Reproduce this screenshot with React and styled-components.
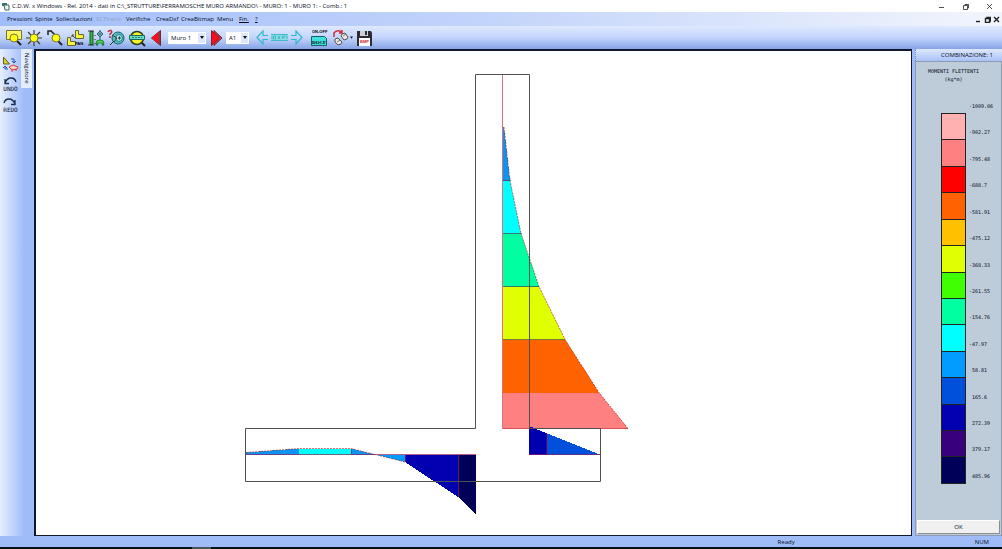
import React from "react";
import styled, { createGlobalStyle } from "styled-components";

const menu = [
  { label: "Pressioni", width: 28 },
  { label: "Spinte", width: 21 },
  { label: "Sollecitazioni", width: 40 },
  { label: "Sf.Tiranti", width: 30, disabled: true },
  { label: "Verifiche", width: 30 },
  { label: "CreaDxf", width: 25 },
  { label: "CreaBitmap", width: 36 },
  { label: "Menu", width: 22 },
  { label: "Fin.", width: 16, underline: true },
  { label: "?", width: 8, underline: true },
];

const legendColors = [
  "#ffb0b0", "#ff8080", "#ff0000", "#ff6200", "#ffc000", "#e0ff00", "#40ff00",
  "#00ffa0", "#00ffff", "#009cff", "#0050dc", "#0000b0", "#38007c", "#000058",
];

const legendValues = [
  "-1009.06", "-902.27", "-795.48", "-688.7", "-581.91", "-475.12", "-368.33", "-261.55",
  "-154.76", "-47.97", "58.81", "165.6", "272.39", "379.17", "485.96",
];

export default function App() {
  return (
    <>
      <GlobalStyle />
      <Window>
        <TitleBar>
          <AppIcon />
          <Title>
            C.D.W. x Windows - Rel. 2014 - dati in C:\_STRUTTURE\FERRAMOSCHE MURO ARMANDO\ - MURO: 1 - MURO 1: - Comb.: 1
          </Title>
          <WindowControls>
            <PlainButton aria-label="Minimize"><ControlIcon kind="min" /></PlainButton>
            <PlainButton aria-label="Restore"><ControlIcon kind="restore" /></PlainButton>
            <PlainButton aria-label="Close"><ControlIcon kind="close" /></PlainButton>
          </WindowControls>
        </TitleBar>
        <MenuBar>
          {menu.map((m) => (
            <MenuItem key={m.label} $width={m.width} $underline={m.underline} disabled={m.disabled}>
              {m.label}
            </MenuItem>
          ))}
          <ChildControls>
            <PlainButton aria-label="Minimize view"><ControlIcon kind="min" bold /></PlainButton>
            <PlainButton aria-label="Restore view"><ControlIcon kind="restore" bold /></PlainButton>
            <PlainButton aria-label="Close view"><ControlIcon kind="close" bold /></PlainButton>
          </ChildControls>
        </MenuBar>
        <Toolbar />
        <Body>
          <LeftBar>
            <Tools>
              <SideButton aria-label="Redraw"><RedrawIcon /></SideButton>
              <SideButton><CurveIcon />UNDO</SideButton>
              <SideButton><CurveIcon flip />REDO</SideButton>
            </Tools>
            <Navigator>Navigatore</Navigator>
          </LeftBar>
          <Canvas>
            <MomentDiagram />
          </Canvas>
          <Panel>
            <PanelTitle>COMBINAZIONE: 1</PanelTitle>
            <PanelBody>
              <LegendTitle>MOMENTI FLETTENTI<br />(kg*m)</LegendTitle>
              <Legend>
                <Swatches>
                  {legendColors.map((c) => <Swatch key={c} $color={c} />)}
                </Swatches>
                <Values>
                  {legendValues.map((v) => (
                    <Value key={v} $positive={!v.startsWith("-")}>{v}</Value>
                  ))}
                </Values>
              </Legend>
              <OkButton>OK</OkButton>
            </PanelBody>
          </Panel>
        </Body>
        <StatusBar>
          <span>Ready</span>
          <span>NUM</span>
        </StatusBar>
        <Taskbar><TaskMark /></Taskbar>
      </Window>
    </>
  );
}

function Toolbar() {
  return (
    <ToolRow>
      <ToolGroup>
        <ToolButton aria-label="Zoom window">
          <Icon viewBox="0 0 18 18">
            <path d="M1.500 1.500h15v9h-15z" fill="#fdf95c" stroke="#77733a" />
            <Lens cx="9" cy="9" />
          </Icon>
        </ToolButton>
        <ToolButton aria-label="Zoom all">
          <Icon viewBox="0 0 18 18">
            <path d="M9 1v4M9 13v4M1 9h4M13 9h4M3 3l3 3M15 3l-3 3M3 15l3-3M15 15l-3-3" stroke="#3a3a30" strokeWidth="1.200" />
            <circle cx="9" cy="9" r="4" fill="#ffff10" stroke="#77733a" />
          </Icon>
        </ToolButton>
        <ToolButton aria-label="Zoom previous">
          <Icon viewBox="0 0 18 18">
            <path d="M2 6V2h4M2 2h3l4 4" fill="none" stroke="#222" strokeWidth="1.500" />
            <Lens cx="10" cy="9" />
          </Icon>
        </ToolButton>
        <ToolButton aria-label="Pan">
          <Icon viewBox="0 0 18 18">
            <path d="M9.500 1.500h3v4h5v4h-8z" fill="#f4f23c" stroke="#66662c" />
            <path d="M1.500 8.500h3v4h5v4h-8z" fill="#f4f23c" stroke="#66662c" />
            <path d="M9 9L6 6M6 8V6h2" stroke="#444" fill="none" />
            <text x="9" y="16" fontSize="4" fontWeight="bold" fontFamily="Liberation Sans, sans-serif">PAN</text>
          </Icon>
        </ToolButton>
        <ToolButton aria-label="Wall view">
          <Icon viewBox="0 0 18 18">
            <path d="M3 2.500h3v13H3z" fill="#38b048" stroke="#175c22" />
            <path d="M1 2h6M1 16h6M8 6v1M8 10v1M8 14v1" stroke="#333" fill="none" />
            <path d="M13 1v10M10 5l3-3 3 3M10 5h6l-3 3z" fill="none" stroke="#2b6870" />
            <path d="M9 14q0-3 4-3t4 3z" fill="#52dd58" stroke="#20872b" />
            <circle cx="10" cy="15.500" r="1.300" fill="#168038" />
            <circle cx="16" cy="15.500" r="1.300" fill="#168038" />
          </Icon>
        </ToolButton>
        <ToolButton aria-label="Query element">
          <Icon viewBox="0 0 18 18">
            <circle cx="11" cy="9" r="6" fill="#53bfc5" stroke="#175e68" />
            <circle cx="12" cy="9" r="3.500" fill="#9ae7e1" stroke="#267d87" />
            <path d="M7 12l-4 4M11 9h3M12.500 7.500v3" stroke="#333" />
            <path d="M5 6l5 3-3 4" fill="none" stroke="#444" />
            <path d="M1 3q1-2 3-1.500Q6 3 3 5v1M3 7v2" fill="none" stroke="#c52235" strokeWidth="1.500" />
          </Icon>
        </ToolButton>
        <ToolButton aria-label="View data">
          <Icon viewBox="0 0 18 18">
            <path d="M13 13l4 4" stroke="#222" strokeWidth="2" />
            <circle cx="9" cy="9" r="6.500" fill="#f5f225" stroke="#2a3d25" strokeWidth="1.500" />
            <path d="M1.500 6.500h15v4h-15z" fill="#62dfc1" stroke="#25665c" />
            <path d="M4 8.500h10" stroke="#2e8074" strokeDasharray="2 1" />
          </Icon>
        </ToolButton>
        <ToolButton aria-label="Previous wall">
          <Icon viewBox="0 0 18 18">
            <path d="M3.500 9l9-7.500v15z" fill="#8b3a42" stroke="#6d2a30" />
            <path d="M3.500 9l7-6v12z" fill="#f8101c" />
          </Icon>
        </ToolButton>
      </ToolGroup>
      <Picker $width={38}>
        <Select aria-label="Wall" defaultValue="m1"><option value="m1">Muro  1</option></Select>
        <PickerArrow><Caret /></PickerArrow>
      </Picker>
      <ToolButton $width={18} aria-label="Next wall">
        <Icon viewBox="0 0 18 18">
          <path d="M7 1.500l8 7.500-8 7.500z" fill="#c8404a" stroke="#6d2a30" />
          <path d="M4.500 1.500l8 7.500-8 7.500z" fill="#f8101c" stroke="#8b1a22" />
        </Icon>
      </ToolButton>
      <Picker $width={23}>
        <Select aria-label="Combination" defaultValue="a1"><option value="a1">A1</option></Select>
        <PickerArrow><Caret /></PickerArrow>
      </Picker>
      <ArrowGroup>
        <OutlineArrow />
        <svg width="17" height="9" viewBox="0 0 17 9">
          <path d="M0 1h17v7H0z" fill="#8adbe6" />
          <path
            d="M0 1.500h17M0 7.500h17M2.500 3v3h2V3zM7 3l2 3M9 3L7 6M11.500 6V3h3M11.500 4.500h2M16 3v3M1 3v3"
            fill="none"
            stroke="#42bcc8"
          />
        </svg>
        <OutlineArrow right />
      </ArrowGroup>
      <ToolButton aria-label="Docx on-off">
        <svg width="18" height="18" viewBox="0 0 18 18" fontFamily="Liberation Sans, sans-serif" fontWeight="bold">
          <text x="2" y="4" fontSize="4">ON-OFF</text>
          <path d="M1.500 7.500h13l2 2v7h-15z" fill="#40e0dc" stroke="#176068" />
          <text x="2" y="15" fontSize="5" fontFamily="Liberation Serif, serif">DOCF</text>
        </svg>
      </ToolButton>
      <SwapButton aria-label="Swap view">
        <Icon viewBox="0 0 18 18">
          <path d="M2 8V4q2-3 6-2l2 2M10 1v3H7" fill="none" stroke="#d02c3b" strokeWidth="1.500" />
          <path d="M10 5l3-1 3 4-1 2-3 1-3-4zM3 10l3-1 4 4-1 2-3 1-3-3z" fill="#e9e7dc" stroke="#555" />
          <path d="M11 7l3-2M5 13l3-2" stroke="#777" />
        </Icon>
        <Caret small />
      </SwapButton>
      <ToolButton aria-label="Save BMP">
        <Icon viewBox="0 0 18 18">
          <path d="M2 2h14l1 2v13H2z" fill="#302b32" />
          <path d="M5 2h8v5H5z" fill="#cbd2d6" />
          <path d="M10 2h2v4h-2z" fill="#302b32" />
          <path d="M4 9h11v8H4z" fill="#fff" />
          <text x="5" y="14" fontSize="4" fontWeight="bold" fontFamily="Liberation Sans, sans-serif" fill="#d31d2a">BMP</text>
        </Icon>
      </ToolButton>
    </ToolRow>
  );
}

function Lens({ cx, cy }) {
  return (
    <>
      <path d="M12 12l4 4" stroke="#222" strokeWidth="2" />
      <circle cx={cx} cy={cy} r="4" fill="#ffff10" stroke="#77733a" />
    </>
  );
}

function Caret({ small }) {
  return (
    <svg width={small ? 3 : 4} height="3" viewBox="0 0 4 3" aria-hidden="true">
      <path d="M0 0h4L2 3z" fill="#111" />
    </svg>
  );
}

function OutlineArrow({ right }) {
  return (
    <svg width="12" height="15" viewBox="0 0 12 15" fill="none" stroke="#30b8cc" strokeWidth="1.200">
      <path d={right ? "M0 5.500h5V1l6 6.500L5 14V9.500H0" : "M12 5.500H7V1L1 7.500 7 14V9.500h5"} />
    </svg>
  );
}

function AppIcon() {
  return (
    <svg width="9" height="9" viewBox="0 0 9 9" fill="none">
      <path d="M1 1h5v3H1z" fill="#397a7a" />
      <path d="M3 3h5v5H4z" fill="#eef5ef" stroke="#3a6666" />
    </svg>
  );
}

function ControlIcon({ kind, bold }) {
  const paths = {
    min: bold ? "M1 5.500h4" : "M1 4.500h5",
    restore: "M1.500 2.500h4v4h-4zM3 2V1.500h3.500V5H6",
    close: "M1 1l5 5M6 1L1 6",
  };
  return (
    <svg width="7" height="7" viewBox="0 0 7 7" fill="none" stroke="#222" strokeWidth={bold ? 1.4 : 0.8}>
      <path d={paths[kind]} />
    </svg>
  );
}

function RedrawIcon() {
  return (
    <svg width="17" height="16" viewBox="0 0 17 16" fill="none">
      <path d="M1.500 1v7h6z" fill="#d8d030" stroke="#665f20" />
      <path d="M9 3h3v4M10 5l2 2 2-2M6 13H3v-3M1 12l2-2 2 2" stroke="#214fc0" />
      <path d="M7 11l4-2 5 2-1 2-5 1z" fill="#f6d3c7" stroke="#d93c33" />
      <path d="M10 13v3M14 13v2" stroke="#d93c33" />
    </svg>
  );
}

function CurveIcon({ flip }) {
  return (
    <svg width="14" height="9" viewBox="0 0 14 9" fill="none" stroke="#16304f" strokeWidth="1.300">
      <path d={flip ? "M1 6q1-4 5-4 4 0 6 5M8 7.500h4V3" : "M13 6q-1-4-5-4-4 0-6 5M6 7.500H2V3"} />
    </svg>
  );
}

// Retaining wall section with the bending moment bands drawn on stem and footing
function MomentDiagram() {
  return (
    <Drawing viewBox="36 51 875 484" role="img" aria-label="Momenti flettenti">
      <g shapeRendering="crispEdges">
        <path d="M503 127H504L510 180.500H503z" fill="#0c94f2" />
        <path d="M503 180.500H510L521 233.500H503z" fill="#00ffff" />
        <path d="M503 233.500H521L539 286.500H503z" fill="#00ffa0" />
        <path d="M503 286.500H539L565 339.500H503z" fill="#e0ff00" />
        <path d="M503 339.500H565L599 392.500H503z" fill="#ff6200" />
        <path d="M503 392.500H599L628 428.500H503z" fill="#ff8080" />
        <path d="M529 426L547 433.500V454.500H529z" fill="#0000b0" />
        <path d="M547 433.500L600 454.500H547z" fill="#0050dc" />
        <path d="M246 452.500L299 448.500V454.500H246z" fill="#0c94f2" />
        <path d="M299 448.500H351V454.500H299z" fill="#00ffff" />
        <path d="M351 448.500L375 454.500H351z" fill="#0c94f2" />
        <path d="M375 454.500H405V462z" fill="#009cff" />
        <path d="M405 454.500H458V497L405 462z" fill="#0000b0" />
        <path d="M458 454.500H476V515L458 497z" fill="#000058" />
      </g>
      <g fill="none" stroke="#a8392f" strokeWidth="0.700">
        <path d="M502.500 74V428.500H628" stroke="#c23a40" />
        <path d="M504 127L510 180.500 521 233.500 539 286.500 565 339.500 599 392.500 628 428.500" strokeDasharray="2 1" />
        <path d="M503 180.500h8M503 233.500h19M503 286.500h36M503 339.500h62" stroke="#444" />
        <path d="M246 452.500L299 448.500H351L375 454.500 405 462" strokeDasharray="2 1" />
        <path d="M246 454.500H476M405.500 454.500V462M458.500 454.500V497M351.500 449v5M529 454.500H600M547 433.500V454.500" stroke="#922058" />
      </g>
      <path
        d="M475.500 74.500H529.500V428.500H600.500V481.500H245.500V428.500H475.500z"
        fill="none"
        stroke="#505050"
        strokeWidth="1"
      />
    </Drawing>
  );
}

const GlobalStyle = createGlobalStyle`
  * { box-sizing: border-box; }
  body {
    margin: 0;
    font-family: "Open Sans", "Noto Sans", sans-serif;
    font-size: 6px;
    line-height: 10px;
    color: #060c1c;
  }
  button, select { font: inherit; color: inherit; }
  svg { display: block; flex: none; }
`;

const Window = styled.div`
  display: flex;
  flex-direction: column;
  min-height: 100vh;
  background: #a0bcf8;
`;

const TitleBar = styled.header`
  display: flex;
  align-items: center;
  height: 12px;
  padding-left: 1px;
  background: #ffffff;
`;

const Title = styled.h1`
  flex: 1;
  margin: 0 0 0 2px;
  font-size: 6px;
  font-weight: 400;
  white-space: nowrap;
`;

const PlainButton = styled.button`
  display: flex;
  padding: 0;
  border: 0;
  background: none;
`;

const WindowControls = styled.div`
  display: flex;
  gap: 17px;
  padding-right: 9px;
`;

const MenuBar = styled.nav`
  display: flex;
  align-items: center;
  height: 14px;
  padding-left: 7px;
  background: linear-gradient(90deg, #a1bdfa, #c4d5fb 50%, #f2f5fc);
`;

const MenuItem = styled.button`
  width: ${(p) => p.$width}px;
  padding: 0;
  border: 0;
  background: none;
  text-align: left;
  white-space: nowrap;
  ${(p) => (p.$underline ? "text-decoration: underline;" : "")}

  &:disabled {
    color: #8fa3cb;
  }
`;

const ChildControls = styled.div`
  display: flex;
  gap: 2px;
  margin-left: auto;
  padding-right: 2px;
`;

const ToolRow = styled.div`
  display: flex;
  align-items: center;
  height: 23px;
  padding-left: 4px;
  background: linear-gradient(#dfe9fe, #c3d5fb 50%, #86a4e6);
`;

const ToolGroup = styled.div`
  display: flex;
  justify-content: space-between;
  width: 163px;
`;

const ToolButton = styled(PlainButton)`
  justify-content: center;
  width: ${(p) => p.$width || 20}px;
`;

const SwapButton = styled(PlainButton)`
  align-items: center;
  margin: 0 1px 0 3px;
`;

const Icon = styled.svg`
  width: 18px;
  height: 18px;
`;

const Picker = styled.label`
  display: flex;
  align-items: center;
  width: ${(p) => p.$width}px;
  height: 12px;
  margin: 0 1px;
  background: #ffffff;
`;

const Select = styled.select`
  flex: 1;
  min-width: 0;
  padding: 0 0 0 3px;
  border: 0;
  background: none;
  appearance: none;
  white-space: pre;
`;

const PickerArrow = styled.span`
  display: flex;
  align-items: center;
  justify-content: center;
  align-self: stretch;
  width: 7px;
  margin: 1px;
  background: #dce7fd;
  pointer-events: none;
`;

const ArrowGroup = styled.div`
  display: flex;
  align-items: center;
  gap: 3px;
  margin: 0 6px;
`;

const Body = styled.main`
  display: flex;
  flex: 1;
`;

const LeftBar = styled.aside`
  display: flex;
  width: 34px;
  background: linear-gradient(90deg, #e6eefe, #a0bcf8 70%);
`;

const Tools = styled.div`
  display: flex;
  flex-direction: column;
  align-items: center;
  gap: 4px;
  width: 21px;
  padding-top: 7px;
`;

const SideButton = styled(PlainButton)`
  flex-direction: column;
  align-items: center;
  font-family: "DejaVu Sans Mono", monospace;
  line-height: 8px;
`;

const Navigator = styled.div`
  align-self: flex-start;
  width: 11px;
  padding: 4px 0;
  background: #e4edfd;
  writing-mode: vertical-rl;
  line-height: 11px;
`;

const Canvas = styled.section`
  display: flex;
  flex: 1;
  min-width: 0;
  border: 2px solid #111a2c;
  border-bottom-width: 1px;
  border-right-width: 1px;
  background: #ffffff;
`;

const Drawing = styled.svg`
  width: 100%;
  height: auto;
`;

const Panel = styled.aside`
  display: flex;
  flex-direction: column;
  width: 87px;
  margin-left: 3px;
`;

const PanelTitle = styled.h2`
  margin: 0;
  padding: 0 9px 0 0;
  height: 12px;
  border-left: 1px dotted #6d8fd0;
  background: linear-gradient(#dde8fe, #a9c2f7);
  font-size: 6px;
  font-weight: 400;
  line-height: 12px;
  text-align: right;
`;

const PanelBody = styled.div`
  display: flex;
  flex: 1;
  flex-direction: column;
  border: 1px solid #8b9bb5;
  background: #becbd9;
`;

const LegendTitle = styled.h3`
  margin: 5px 10px 0 0;
  font-family: "DejaVu Sans Mono", monospace;
  font-size: 5px;
  font-weight: 400;
  line-height: 8px;
  text-align: center;
`;

const Legend = styled.div`
  display: flex;
  gap: 3px;
  height: 382px;
  margin: 19px 0 auto 25px;
  font-family: "DejaVu Sans Mono", monospace;
  font-size: 5px;
  line-height: 8px;
`;

const Swatches = styled.div`
  display: flex;
  flex-direction: column;
  width: 25px;
  margin-top: 11px;
  border: 1px solid #222222;
`;

const Swatch = styled.div`
  flex: 1;
  background: ${(p) => p.$color};

  & + & {
    border-top: 1px solid #222222;
  }
`;

const Values = styled.ul`
  display: flex;
  flex-direction: column;
  justify-content: space-between;
  margin: 0 0 4px;
  padding: 0;
  list-style: none;
`;

const Value = styled.li`
  padding-left: ${(p) => (p.$positive ? 3 : 0)}px;
`;

const OkButton = styled.button`
  height: 14px;
  margin: 0 1px 1px;
  padding: 0;
  border: 1px solid;
  border-color: #ffffff #8c8c8c #8c8c8c #ffffff;
  background: #f0f0f0;
`;

const StatusBar = styled.footer`
  display: flex;
  align-items: center;
  justify-content: flex-end;
  gap: 180px;
  height: 11px;
  padding-right: 13px;
  background: #a0bcf8;
`;

const Taskbar = styled.div`
  height: 2px;
  padding-left: 192px;
  background: #06101c;
`;

const TaskMark = styled.div`
  width: 19px;
  height: 2px;
  background: #46525e;
`;
